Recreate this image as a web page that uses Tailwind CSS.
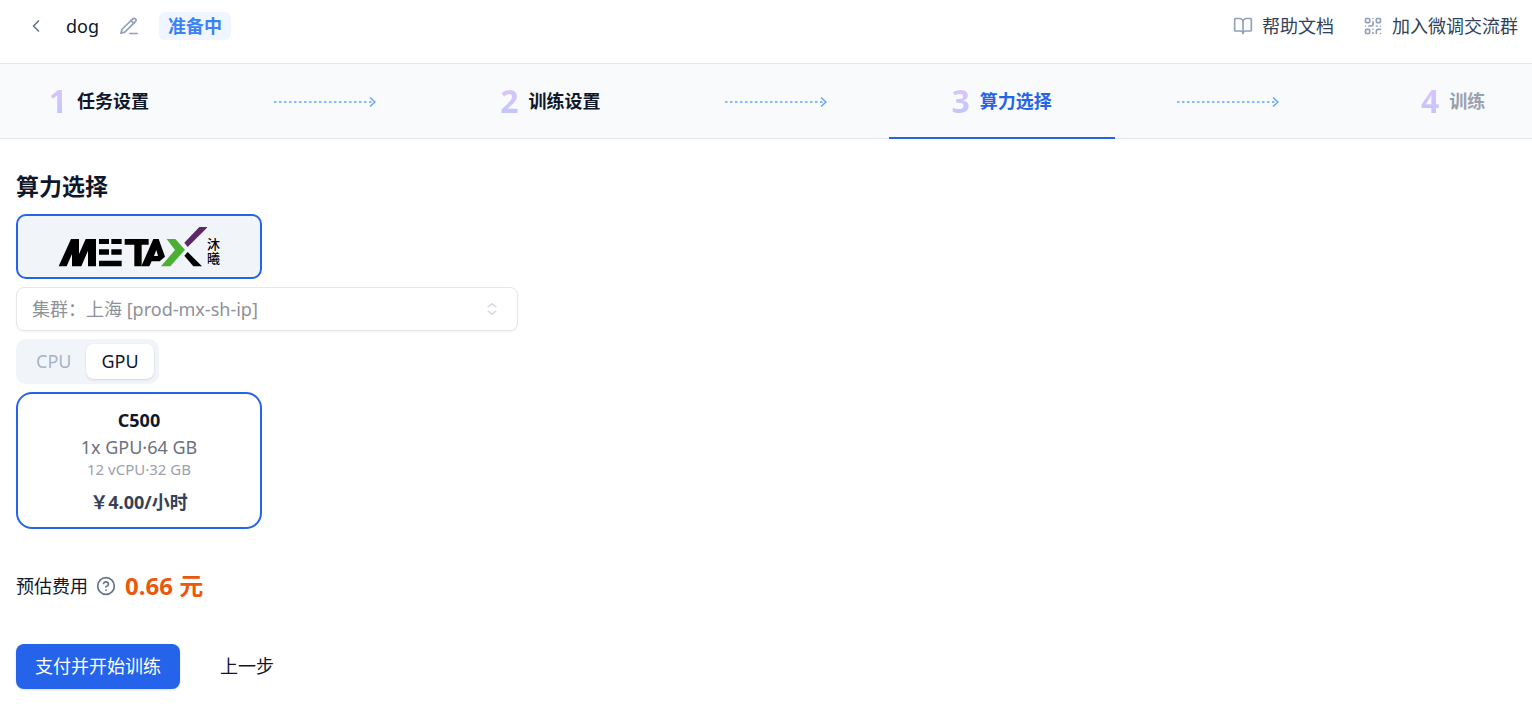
<!DOCTYPE html>
<html lang="zh-CN">
<head>
    <meta charset="UTF-8">
    <meta name="viewport" content="width=device-width, initial-scale=1.0">
    <title>算力选择</title>
    <script src="https://cdn.jsdelivr.net/npm/@tailwindcss/browser@4"></script>
</head>
<body class="bg-white text-slate-900 text-[18px] leading-6 font-['Noto_Sans','Noto_Sans_CJK_SC',sans-serif]">

    <!-- Top bar -->
    <header class="flex items-start justify-between h-16 pl-4 pr-[14px] pt-3 border-b border-slate-200">
        <div class="flex items-center h-7">
            <button type="button" aria-label="返回" class="w-10 flex justify-center text-slate-500">
                <svg class="w-5 h-5" viewBox="0 0 24 24" fill="none" stroke="currentColor" stroke-width="2" stroke-linecap="round" stroke-linejoin="round"><path d="m15 18-6-6 6-6"/></svg>
            </button>
            <h1 class="ml-[10px]">dog</h1>
            <button type="button" aria-label="编辑名称" class="ml-5 text-slate-400">
                <svg class="w-5 h-5" viewBox="0 0 24 24" fill="none" stroke="currentColor" stroke-width="2" stroke-linecap="round" stroke-linejoin="round"><path d="M13 21h9"/><path d="M16.5 3.5a2.12 2.12 0 0 1 3.2 0c.9.9.9 2.3 0 3.2L7 19.3l-4.7 1.4 1.4-4.8z"/><path d="m14.5 5.5 3.2 3.2"/></svg>
            </button>
            <span class="ml-5 px-[9px] h-7 leading-7 rounded-md bg-[#eff6ff] text-[#3b82f6] font-bold">准备中</span>
        </div>
        <nav class="flex items-center h-7 gap-[29px] text-slate-700">
            <a href="#" class="flex items-center gap-[9px]">
                <svg class="w-5 h-5 text-slate-400" viewBox="0 0 24 24" fill="none" stroke="currentColor" stroke-width="2" stroke-linecap="round" stroke-linejoin="round"><path d="M12 7v14"/><path d="M3 18a1 1 0 0 1-1-1V4a1 1 0 0 1 1-1h5a4 4 0 0 1 4 4 4 4 0 0 1 4-4h5a1 1 0 0 1 1 1v13a1 1 0 0 1-1 1h-6a3 3 0 0 0-3 3 3 3 0 0 0-3-3z"/></svg>
                帮助文档
            </a>
            <a href="#" class="flex items-center gap-[9px]">
                <svg class="w-5 h-5 text-slate-400" viewBox="0 0 24 24" fill="none" stroke="currentColor" stroke-width="2" stroke-linecap="round" stroke-linejoin="round"><rect width="5" height="5" x="3" y="3" rx="1"/><rect width="5" height="5" x="16" y="3" rx="1"/><rect width="5" height="5" x="3" y="16" rx="1"/><path d="M21 16h-3a2 2 0 0 0-2 2v3"/><path d="M21 21v.01"/><path d="M12 7v3a2 2 0 0 1-2 2H7"/><path d="M3 12h.01"/><path d="M12 3h.01"/><path d="M12 16v.01"/><path d="M16 12h1"/><path d="M21 12v.01"/><path d="M12 21v-1"/></svg>
                加入微调交流群
            </a>
        </nav>
    </header>

    <!-- Steps -->
    <div class="overflow-hidden bg-[#f8fafc]">
        <ol class="grid grid-cols-7 h-[75px] -ml-[14px] -mr-[34px] border-b border-slate-200 font-bold">
            <li class="flex items-center justify-center gap-[10px]">
                <span class="text-[32px] leading-10 bg-linear-to-b from-[#d8b4fe] to-[#a5b4fc] bg-clip-text text-transparent opacity-75">1</span>任务设置
            </li>
            <li class="flex items-center justify-center pt-px text-[#60a5fa]" aria-hidden="true">
                <svg class="w-[103px] h-3" viewBox="0 0 103 12" fill="none" stroke="currentColor"><path d="M1 6h98" stroke-width="1.5" stroke-dasharray="2.5 2.5"/><path d="m97 1.5 5 4.5-5 4.5" stroke-width="1.5"/></svg>
            </li>
            <li class="flex items-center justify-center gap-[10px]">
                <span class="text-[32px] leading-10 bg-linear-to-b from-[#d8b4fe] to-[#a5b4fc] bg-clip-text text-transparent opacity-75">2</span>训练设置
            </li>
            <li class="flex items-center justify-center pt-px text-[#60a5fa]" aria-hidden="true">
                <svg class="w-[103px] h-3" viewBox="0 0 103 12" fill="none" stroke="currentColor"><path d="M1 6h98" stroke-width="1.5" stroke-dasharray="2.5 2.5"/><path d="m97 1.5 5 4.5-5 4.5" stroke-width="1.5"/></svg>
            </li>
            <li class="flex items-center justify-center gap-[10px] -mb-px pt-px border-b-2 border-[#2563eb] text-[#2563eb]" aria-current="step">
                <span class="text-[32px] leading-10 bg-linear-to-b from-[#d8b4fe] to-[#a5b4fc] bg-clip-text text-transparent opacity-75">3</span>算力选择
            </li>
            <li class="flex items-center justify-center pt-px text-[#60a5fa]" aria-hidden="true">
                <svg class="w-[103px] h-3" viewBox="0 0 103 12" fill="none" stroke="currentColor"><path d="M1 6h98" stroke-width="1.5" stroke-dasharray="2.5 2.5"/><path d="m97 1.5 5 4.5-5 4.5" stroke-width="1.5"/></svg>
            </li>
            <li class="flex items-center justify-center gap-[10px] text-gray-400">
                <span class="text-[32px] leading-10 bg-linear-to-b from-[#d8b4fe] to-[#a5b4fc] bg-clip-text text-transparent opacity-75">4</span>训练
            </li>
        </ol>
    </div>

    <main class="px-4 pt-[31px] pb-8">
        <h2 class="text-[23px] leading-8 font-bold">算力选择</h2>

        <div class="mt-3 flex flex-col items-start gap-2">
            <!-- Vendor -->
            <button type="button" aria-label="MetaX 沐曦" class="w-[246px] h-[65px] flex items-center justify-center rounded-[10px] border-2 border-[#2563eb] bg-slate-100 text-black">
                <svg class="w-[150px] h-[46px]" viewBox="0 0 450 138">
                    <path d="M5 127 42 45H66V90L86 45H117V127H93V80L73 127H45V90L29 127Z"/>
                    <path d="M126 45h30v15h-30zM163 45h31v15h-31zM126 76h30v16h-30zM163 76h31v16h-31zM126 110h68v17h-68z"/>
                    <path d="M203 45H275V62H254V127H232V62H203Z"/>
                    <path fill-rule="evenodd" d="M253 127 289 45H305L324 98 308 112H284L277 127ZM291 96H303L298 78Z"/>
                    <path fill="#4caf35" d="M329 45H355L384 77 340 127H312L354 78Z"/>
                    <path fill="#5c2667" d="M427 9H452L392 69 382 56Z"/>
                    <path d="M382 95 392 84 435 127H409Z"/>
                </svg>
                <span class="pt-2 pr-px text-[13px] leading-[14px] font-medium w-[15px] break-all">沐曦</span>
            </button>

            <!-- Cluster -->
            <div class="grid w-full max-w-[502px] items-center">
                <select aria-label="集群" disabled class="col-start-1 row-start-1 appearance-none w-full h-11 pl-[15px] pr-10 rounded-lg border border-gray-200 bg-white text-[#8e9198] opacity-100 shadow-xs">
                    <option>集群：上海 [prod-mx-sh-ip]</option>
                </select>
                <svg class="col-start-1 row-start-1 justify-self-end mr-[17px] w-[18px] h-[18px] text-gray-300 pointer-events-none" viewBox="0 0 24 24" fill="none" stroke="currentColor" stroke-width="2" stroke-linecap="round" stroke-linejoin="round"><path d="m7 15 5 4 5-4"/><path d="m7 9 5-4 5 4"/></svg>
            </div>

            <!-- CPU / GPU -->
            <div role="tablist" class="flex items-center h-[45px] p-[5px] rounded-[10px] bg-slate-100">
                <button type="button" role="tab" aria-selected="false" disabled class="h-[35px] px-[15px] pb-[2px] text-slate-400/80">CPU</button>
                <button type="button" role="tab" aria-selected="true" class="h-[35px] px-[15px] pb-[2px] rounded-lg bg-white shadow-sm">GPU</button>
            </div>

            <button type="button" class="w-[246px] h-[137px] flex flex-col items-center justify-center rounded-2xl border-2 border-[#2563eb] bg-white">
                <span class="font-bold leading-[26px]">C500</span>
                <span class="leading-7 text-gray-500">1x GPU·64 GB</span>
                <span class="text-[15px] leading-4 text-gray-400">12 vCPU·32 GB</span>
                <span class="mt-3 font-bold leading-[26px] text-gray-700">￥4.00/小时</span>
            </button>
        </div>

        <div class="mt-[41px] flex items-center h-8">
            <span>预估费用</span>
            <button type="button" aria-label="费用说明" class="ml-2 text-slate-500">
                <svg class="w-5 h-5" viewBox="0 0 24 24" fill="none" stroke="currentColor" stroke-width="2" stroke-linecap="round" stroke-linejoin="round"><circle cx="12" cy="12" r="10"/><path d="M9.09 9a3 3 0 0 1 5.83 1c0 2-3 3-3 3"/><path d="M12 17h.01"/></svg>
            </button>
            <strong class="ml-[9px] text-2xl text-[#ea580c]">0.66 元</strong>
        </div>

        <div class="mt-[42px] flex items-center">
            <button type="button" class="h-[45px] px-[19px] pb-[2px] rounded-lg bg-[#2563eb] text-white shadow-sm">支付并开始训练</button>
            <button type="button" class="ml-5 h-[45px] px-5 pb-[2px]">上一步</button>
        </div>
    </main>

</body>
</html>
